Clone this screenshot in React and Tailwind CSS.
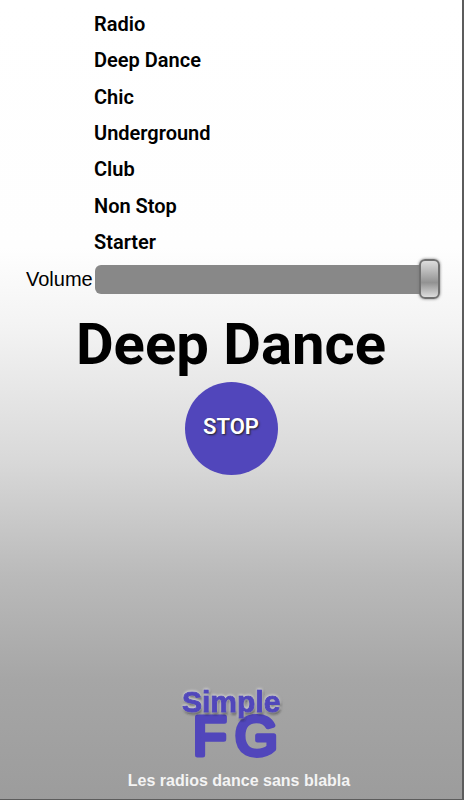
import { useState } from "react";

const stations = ["Radio", "Deep Dance", "Chic", "Underground", "Club", "Non Stop", "Starter"];

function Logo() {
  return (
    <svg
      viewBox="0 0 120 88"
      className="h-[88px] w-[120px] font-['Liberation_Sans',Arial,sans-serif]"
      role="img"
      aria-label="Simple FG"
    >
      <defs>
        <filter id="relief" x="-10%" y="-20%" width="120%" height="140%">
          <feDropShadow dx="0" dy="-1" stdDeviation="1" floodColor="#ffffff" floodOpacity="0.5" />
          <feDropShadow dx="1" dy="2" stdDeviation="1" floodColor="#222222" floodOpacity="0.5" />
        </filter>
      </defs>
      <g fill="#5146bb" stroke="#5146bb" strokeLinejoin="round" strokeLinecap="round">
        <text y="72" fontSize="55" strokeWidth="5">
          <tspan x="22">F</tspan>
          <tspan x="64">G</tspan>
        </text>
        <text x="11" y="29" fontSize="30" fontWeight="700" strokeWidth="1" filter="url(#relief)">Simple</text>
      </g>
    </svg>
  );
}

export default function App() {
  const [station, setStation] = useState("Deep Dance");
  const [playing, setPlaying] = useState(true);
  const [volume, setVolume] = useState(100);

  return (
    <main className="flex min-h-screen flex-col border-r-2 border-b border-[#5c5c5c] bg-[linear-gradient(180deg,#ffffff_0%,#fefefe_31%,#f3f3f3_41%,#d8d8d8_58%,#bababa_72%,#a6a6a6_85%,#9c9c9c_100%)] pt-1.5 font-[Roboto,sans-serif] text-black">
      <nav className="ml-[94px] grid h-[254px] auto-rows-fr justify-items-start">
        {stations.map((name) => (
          <button key={name} type="button" onClick={() => setStation(name)} className="text-xl font-semibold">
            {name}
          </button>
        ))}
      </nav>

      <div className="flex h-[38px] items-center pr-[22px] pl-[26px]">
        <label htmlFor="volume" className="w-[69px] font-['Liberation_Sans',Arial,sans-serif] text-[20px]">
          Volume
        </label>
        <input
          id="volume"
          type="range"
          min="0"
          max="100"
          value={volume}
          onChange={(event) => setVolume(Number(event.target.value))}
          className="h-[29px] min-w-0 flex-1 appearance-none rounded-md bg-[#888888] [&::-webkit-slider-thumb]:h-10 [&::-webkit-slider-thumb]:w-[21px] [&::-webkit-slider-thumb]:appearance-none [&::-webkit-slider-thumb]:rounded-md [&::-webkit-slider-thumb]:border-2 [&::-webkit-slider-thumb]:border-[#707070] [&::-webkit-slider-thumb]:bg-[linear-gradient(180deg,#dddddd,#929292_60%,#dddddd)] [&::-webkit-slider-thumb]:shadow-[0_0_3px_#777777]"
        />
      </div>

      <h1 className="mt-3.5 text-center text-[58px] leading-[64px] font-bold">{station}</h1>

      <button
        type="button"
        onClick={() => setPlaying(!playing)}
        className="mx-auto mt-1.5 size-[93px] rounded-full bg-[#5146bb] pb-1 text-[22px] font-semibold text-white [text-shadow:1px_1px_2px_#222222]"
      >
        {playing ? "STOP" : "PLAY"}
      </button>

      <footer className="mt-auto flex flex-col items-center pb-2">
        <Logo />
        <p className="ml-4 font-['Liberation_Sans',Arial,sans-serif] text-base leading-5 font-bold text-[#f4f4f4]">
          Les radios dance sans blabla
        </p>
      </footer>
    </main>
  );
}
